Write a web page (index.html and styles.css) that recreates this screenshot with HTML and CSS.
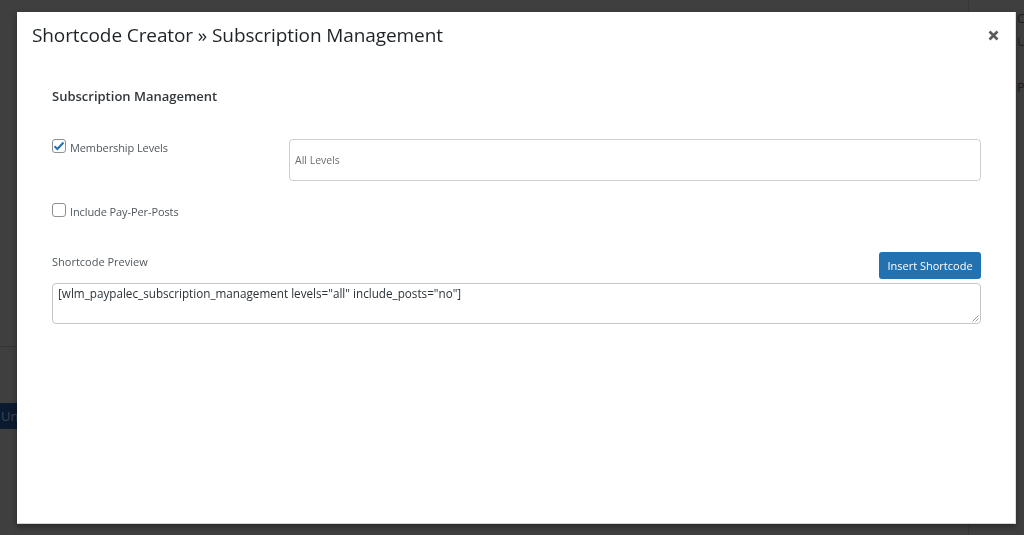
FILE: index.html
```html
<!DOCTYPE html>
<html lang="en">
<head>
<meta charset="utf-8">
<title>Shortcode Creator</title>
<link rel="stylesheet" href="styles.css">
</head>
<body>
<div class="page">
  <div class="page-left">
    <div class="page-rule"></div>
    <div class="page-btn">Unpublish</div>
  </div>
  <div class="page-right">
    <div class="side-line">Close</div>
    <div class="side-line">Users</div>
    <div class="side-line">Posts</div>
  </div>
</div>

<div class="modal" role="dialog">
  <header class="modal-head">
    <h1 class="modal-title">Shortcode Creator » Subscription Management</h1>
    <button class="close" aria-label="Close">
      <svg width="11" height="11" viewBox="0 0 11 11"><path d="M1.5 1.5 L9.5 9.5 M9.5 1.5 L1.5 9.5" stroke="#5b5b5b" stroke-width="2.6" stroke-linecap="butt"/></svg>
    </button>
  </header>
  <div class="modal-body">
    <h2 class="section-title">Subscription Management</h2>
    <div class="row row-levels">
      <label class="check">
        <span class="box checked">
          <svg width="12" height="10" viewBox="0 0 12 10"><path d="M1.5 5.2 L4.4 8 L10.5 1.5" fill="none" stroke="#2271b1" stroke-width="2"/></svg>
        </span>
        <span class="check-label">Membership Levels</span>
      </label>
      <div class="select">All Levels</div>
    </div>
    <div class="row row-posts">
      <label class="check">
        <span class="box"></span>
        <span class="check-label">Include Pay-Per-Posts</span>
      </label>
    </div>
    <div class="preview-head">
      <span class="preview-label">Shortcode Preview</span>
      <button class="insert">Insert Shortcode</button>
    </div>
    <div class="textarea">[wlm_paypalec_subscription_management levels="all" include_posts="no"]<span class="grip"><svg width="7" height="7" viewBox="0 0 7 7"><path d="M6.5 0.5 L0.5 6.5 M6.5 3.5 L3.5 6.5" stroke="#8c8c8c" stroke-width="0.9"/></svg></span></div>
  </div>
</div>
</body>
</html>
```

FILE: styles.css
```css
* { box-sizing: border-box; }
html, body { margin: 0; padding: 0; }
body {
  width: 1024px;
  height: 535px;
  overflow: hidden;
  background: #3f3f3f;
  font-family: "Open Sans", "Noto Sans", sans-serif;
}
.page {
  display: flex;
  justify-content: space-between;
  height: 535px;
}
.page-left {
  width: 17px;
  padding-top: 346px;
  overflow: hidden;
}
.page-rule {
  height: 1px;
  background: #353535;
}
.page-btn {
  margin-top: 56px;
  height: 26px;
  width: 60px;
  background: #0b1a2e;
  color: #3a4556;
  font-size: 13px;
  line-height: 26px;
  padding-left: 1px;
  white-space: nowrap;
}
.page-right {
  width: 56px;
  padding-top: 7px;
  border-left: 1px solid #383838;
  padding-left: 48px;
  overflow: hidden;
}
.side-line {
  color: #1f1f1f;
  font-size: 13px;
  white-space: nowrap;
  height: 23px;
  line-height: 23px;
}
.side-line:nth-child(3) { margin-top: 23px; }

.modal {
  position: fixed;
  left: 17px;
  top: 12px;
  width: 999px;
  height: 512px;
  background: #fff;
  box-shadow: 0 3px 6px rgba(0,0,0,0.35);
  border-bottom: 1px solid #d4d4d4;
  border-right: 1px solid #dcdcdc;
}
.modal-head {
  display: flex;
  align-items: center;
  justify-content: space-between;
  height: 46px;
  padding: 0 16px 0 15px;
}
.modal-title {
  margin: 0;
  font-size: 19px;
  font-weight: 500;
  color: #1d2327;
  letter-spacing: -0.1px;
}
.close {
  border: 0;
  background: none;
  padding: 0;
  width: 12px;
  height: 12px;
  display: flex;
  align-items: center;
  justify-content: center;
}
.modal-body {
  padding: 28px 34px 0 35px;
}
.section-title {
  margin: 0;
  font-size: 13px;
  font-weight: 600;
  color: #32373c;
  line-height: 20px;
}
.row {
  display: flex;
  align-items: flex-start;
}
.row-levels { margin-top: 33px; }
.row-posts { margin-top: 22px; }
.check {
  display: flex;
  align-items: flex-start;
  width: 237px;
  flex: none;
}
.box {
  width: 14px;
  height: 14px;
  border: 1px solid #8c8f94;
  border-radius: 3px;
  background: #fff;
  display: flex;
  align-items: center;
  justify-content: center;
  flex: none;
}
.check-label {
  margin-left: 4px;
  padding-top: 1px;
  font-size: 11px;
  color: #50575e;
  line-height: 16px;
  letter-spacing: -0.1px;
}
.select {
  flex: 1;
  height: 42px;
  border: 1px solid #cfcfcf;
  border-radius: 4px;
  padding: 0 5px;
  font-size: 10.5px;
  color: #6e6e6e;
  display: flex;
  align-items: center;
}
.preview-head {
  margin-top: 32px;
  display: flex;
  justify-content: space-between;
  align-items: flex-start;
}
.preview-label {
  font-size: 11px;
  color: #50575e;
  margin-top: 2px;
  line-height: 16px;
}
.insert {
  height: 27px;
  width: 102px;
  border: 0;
  border-radius: 3px;
  background: #2271b1;
  color: #fff;
  font-family: inherit;
  font-size: 11px;
  padding: 0;
}
.textarea {
  position: relative;
  margin-top: 4px;
  height: 41px;
  border: 1px solid #c6c6c6;
  border-radius: 4px;
  padding: 1px 5px;
  font-size: 11.7px;
  color: #2c3338;
  line-height: 16px;
}
.grip {
  position: absolute;
  right: 1px;
  bottom: 1px;
  width: 7px;
  height: 7px;
  display: flex;
}
```
